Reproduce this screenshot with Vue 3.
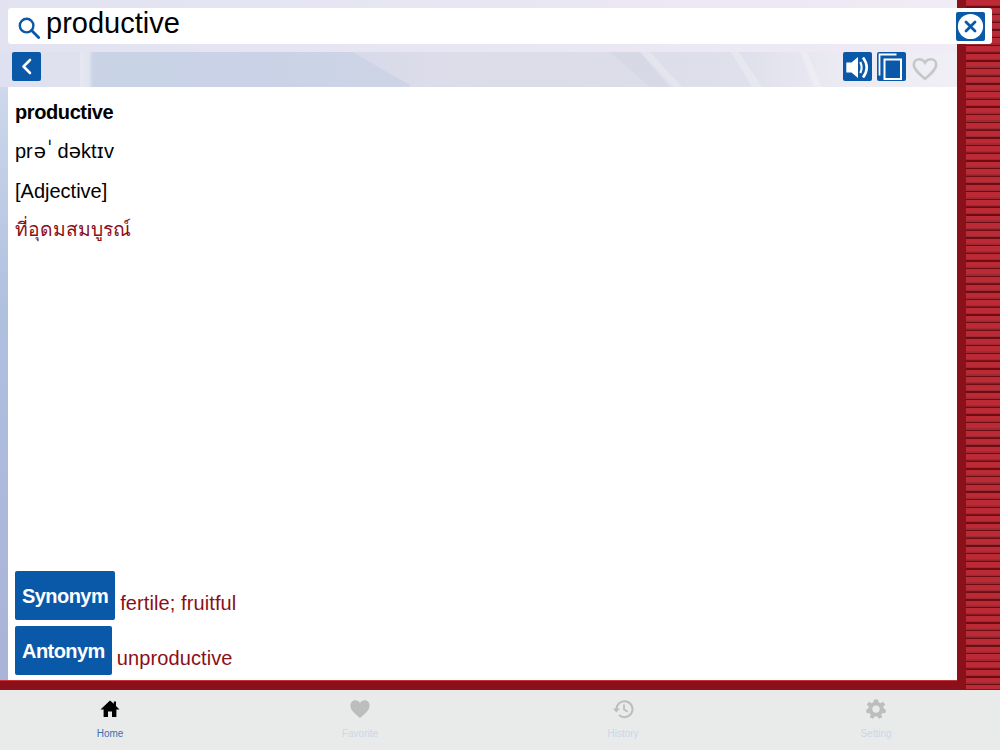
<script setup>
const tabs = [
  { label: 'Home', active: true, icon: 'home' },
  { label: 'Favorite', icon: 'heart' },
  { label: 'History', icon: 'history' },
  { label: 'Setting', icon: 'gear' },
]
</script>

<template>
  <div class="app">
    <div class="main">
      <div class="column">
        <div class="search">
          <svg class="search-icon" viewBox="0 0 22 22" width="22" height="22">
            <circle cx="8.6" cy="8.6" r="6.8" fill="none" stroke="#0a58a8" stroke-width="2.4" />
            <path d="M13.6 13.6 L20.6 20.6" stroke="#0a58a8" stroke-width="2.8" stroke-linecap="round" />
          </svg>
          <span class="query">productive</span>
          <span class="btn clear">
            <svg viewBox="0 0 29 29" width="29" height="29">
              <circle cx="14.5" cy="14.5" r="12.6" fill="#fff" />
              <path d="M10 10 L19 19 M19 10 L10 19" stroke="#0a58a8" stroke-width="2.8" stroke-linecap="round" />
            </svg>
          </span>
        </div>
        <div class="toolbar">
          <svg class="art" viewBox="0 0 957 35" width="957" height="35" preserveAspectRatio="none">
            <rect x="80" y="0" width="10" height="35" fill="#fff" fill-opacity=".22" />
            <polygon points="92,0 352,0 410,33 410,35 92,35" fill="#c2cde3" fill-opacity=".5" />
            <polygon points="610,0 640,0 675,35 650,35" fill="#c9ccdc" fill-opacity=".25" />
            <polygon points="640,0 650,0 682,35 670,35" fill="#fff" fill-opacity=".22" />
            <polygon points="731,0 739,0 762,35 752,35" fill="#fff" fill-opacity=".22" />
            <polygon points="800,0 807,0 822,35 814,35" fill="#fff" fill-opacity=".22" />
          </svg>
          <span class="btn">
            <svg viewBox="0 0 29 29" width="29" height="29">
              <path d="M18 8 L11.5 14.5 L18 21" fill="none" stroke="#fff" stroke-width="2.6" stroke-linecap="round" stroke-linejoin="round" />
            </svg>
          </span>
          <div class="tools">
            <span class="btn">
              <svg viewBox="0 0 29 29" width="29" height="29">
                <path d="M3.3 10.5 H8.5 L15 5 V26 L8.5 20.5 H3.3 Z" fill="#fff" />
                <path d="M17.3 10 Q20 15.5 17.3 21" fill="none" stroke="#fff" stroke-width="2.2" />
                <path d="M20 5.5 Q27.5 15.5 20 25.5" fill="none" stroke="#fff" stroke-width="2.6" />
              </svg>
            </span>
            <span class="btn">
              <svg viewBox="0 0 29 29" width="29" height="29">
                <path d="M2.5 23.5 V2.5 H19.5" fill="none" stroke="#fff" stroke-width="1.8" />
                <rect x="7.5" y="7.5" width="16.5" height="19.5" fill="none" stroke="#fff" stroke-width="2" />
              </svg>
            </span>
            <svg class="fav" viewBox="0 0 26 24" width="26" height="24">
              <path d="M13 21.8 C7 16.5 1.8 12.5 1.8 7.8 C1.8 4.5 4.3 2.2 7.2 2.2 C9.5 2.2 11.8 3.4 13 5.6 C14.2 3.4 16.5 2.2 18.8 2.2 C21.7 2.2 24.2 4.5 24.2 7.8 C24.2 12.5 19 16.5 13 21.8 Z" fill="none" stroke="#c4c8c8" stroke-width="2.6" />
            </svg>
          </div>
        </div>
        <div class="content">
          <p class="word">productive</p>
          <p class="line ipa">pr<span class="alt first">ə</span><span class="alt stress">ˈ</span>d<span class="alt">ə</span>kt<span class="alt">ɪ</span>v</p>
          <p class="line">[Adjective]</p>
          <p class="line thai">ที่อุดมสมบูรณ์</p>
          <div class="related">
            <div class="rel-row"><span class="tag">Synonym</span><span class="rel-text">fertile; fruitful</span></div>
            <div class="rel-row"><span class="tag">Antonym</span><span class="rel-text">unproductive</span></div>
          </div>
        </div>
      </div>
      <div class="stripes"></div>
    </div>
    <nav class="tabbar">
      <div v-for="t in tabs" :key="t.label" class="tab" :class="{ active: t.active }">
        <svg viewBox="0 0 24 24" width="24" height="24">
          <path v-if="t.icon === 'home'" d="M12 3.5 L2.5 12.5 H5.6 V20 H10 V14.5 H14 V20 H18.4 V12.5 H21.5 L18 9 V4.5 H15.8 V6.8 Z" />
          <path v-else-if="t.icon === 'heart'" d="M12 21 C6 16.3 2.4 13 2.4 8.6 C2.4 5.4 4.7 3.2 7.4 3.2 C9.3 3.2 11 4.2 12 6 C13 4.2 14.7 3.2 16.6 3.2 C19.3 3.2 21.6 5.4 21.6 8.6 C21.6 13 18 16.3 12 21 Z" />
          <g v-else-if="t.icon === 'history'">
            <path d="M5.5 12 A8 8 0 1 1 8 18" fill="none" stroke="currentColor" stroke-width="2" />
            <path d="M1.8 11.5 H9 L5.4 15.6 Z" />
            <path d="M13 7.5 V12.5 L16.8 14.8" fill="none" stroke="currentColor" stroke-width="1.8" />
          </g>
          <path v-else fill-rule="evenodd" d="M10 2.5 H14 L14.6 5.3 L16.6 6.2 L19 4.7 L21.3 7.6 L19.3 9.6 L19.8 11.7 L22 12.7 L21.2 16.2 L18.6 16 L17.3 17.7 L18.2 20.2 L15 21.7 L13.5 19.6 H10.5 L9 21.7 L5.8 20.2 L6.7 17.7 L5.4 16 L2.8 16.2 L2 12.7 L4.2 11.7 L4.7 9.6 L2.7 7.6 L5 4.7 L7.4 6.2 L9.4 5.3 Z M12 8.4 A3.7 3.7 0 1 0 12 15.8 A3.7 3.7 0 1 0 12 8.4 Z" />
        </svg>
        <span class="tab-label">{{ t.label }}</span>
      </div>
    </nav>
  </div>
</template>

<style>
html, body { margin: 0; padding: 0; }
</style>

<style scoped>
.app {
  width: 1000px;
  height: 750px;
  display: flex;
  flex-direction: column;
  overflow: hidden;
  font-family: "Liberation Sans", "Noto Sans", "DejaVu Sans", sans-serif;
}
.main {
  height: 690px;
  display: flex;
  background: #8a111a;
}
.column {
  width: 957px;
  height: 681px;
  display: flex;
  flex-direction: column;
  padding: 8px 0 0 8px;
  box-sizing: border-box;
  border-bottom: 1px solid #c8343c;
  background:
    linear-gradient(90deg, rgba(226,226,241,1) 0%, rgba(232,230,243,1) 50%, rgba(240,235,245,1) 100%) 0 0 / 100% 52px no-repeat,
    linear-gradient(180deg, #dfe1f0 8%, #ccd7ea 14%, #b0c0df 45%, #a9b3d7 100%);
}
.search {
  width: 984px;
  height: 36px;
  flex: none;
  background: #fff;
  border-radius: 3px;
  display: flex;
  align-items: center;
  padding: 0 7px 0 10px;
  box-sizing: border-box;
  position: relative;
  z-index: 1;
}
.search-icon { flex: none; margin-top: 3px; }
.query {
  font-size: 29px;
  line-height: 36px;
  color: #000;
  margin-left: 6px;
  margin-top: -6px;
  flex: 1;
}
.btn {
  width: 29px;
  height: 29px;
  flex: none;
  background: #0a58a8;
  border-radius: 2px;
  display: block;
}
.btn svg { display: block; }
.toolbar {
  height: 35px;
  margin: 8px 0 0 -8px;
  width: 957px;
  flex: none;
  box-sizing: border-box;
  padding: 0 19px 6px 12px;
  display: flex;
  align-items: flex-start;
  justify-content: space-between;
  position: relative;
  background: linear-gradient(90deg, #e0e1f0 0%, #dfe1ef 8.5%, #d2d9e8 10%, #d0d7e8 25%, #dcdcea 45%, #dddde9 65%, #e0e0ec 78%, #ecebf3 88%, #f0eff6 100%);
}
.art {
  position: absolute;
  left: 0;
  top: 0;
}
.toolbar > .btn, .tools { position: relative; }
.tools {
  display: flex;
  align-items: center;
  gap: 5px;
}
.fav { margin-left: 1px; margin-top: 4px; }
.content {
  width: 949px;
  flex: 1;
  background: #fff;
  padding: 12px 7px 0;
  box-sizing: border-box;
  display: flex;
  flex-direction: column;
  color: #000;
}
.word, .line {
  margin: 0;
  font-size: 20px;
  line-height: 26px;
  margin-bottom: 13.5px;
}
.word { font-weight: 700; letter-spacing: -0.4px; }
.ipa { margin-top: -1px; margin-bottom: 14.5px; }
.alt { font-family: "DejaVu Sans", sans-serif; }
.first { margin-left: 1px; }
.stress { margin: 0 5px 0 1px; position: relative; top: -3px; }
.thai { color: #8a0f18; font-size: 19.3px; margin-top: -1px; }
.related {
  margin-top: auto;
  display: flex;
  flex-direction: column;
  gap: 6px;
  padding-bottom: 5px;
}
.rel-row {
  display: flex;
  align-items: flex-end;
  gap: 5px;
}
.tag {
  height: 49px;
  padding: 0 7px;
  background: #0a58a8;
  color: #fff;
  font-size: 20px;
  font-weight: 700;
  letter-spacing: -0.55px;
  line-height: 50px;
  border-radius: 2px;
  box-sizing: border-box;
}
.rel-text {
  font-size: 20px;
  letter-spacing: 0.1px;
  line-height: 24px;
  color: #8a0f18;
  margin-bottom: 5px;
}
.stripes {
  width: 43px;
  height: 689px;
  flex: none;
  box-sizing: border-box;
  border-left: 9px solid #8a111a;
  background: repeating-linear-gradient(180deg, #bc2a35 0, #bc2a35 4.5px, #9c2a34 5px, #9c2a34 6px, #6e0c14 6.4px, #6e0c14 7.7px);
}
.tabbar {
  height: 60px;
  flex: none;
  display: flex;
  background: #e9ebeb;
  padding-left: 60px;
  box-sizing: border-box;
}
.tab {
  width: 100px;
  flex: none;
  display: flex;
  flex-direction: column;
  align-items: center;
  padding-top: 7px;
  color: #bcbdbd;
}
.tab:nth-child(1) { margin-right: 150px; }
.tab:nth-child(2) { margin-right: 163px; }
.tab:nth-child(3) { margin-right: 153px; }
.tab svg { fill: currentColor; display: block; }
.tab-label {
  font-size: 10px;
  line-height: 13px;
  margin-top: 6px;
  color: #ccd6e6;
}
.tab.active { color: #000; }
.tab.active .tab-label { color: #3a70b0; }
</style>
